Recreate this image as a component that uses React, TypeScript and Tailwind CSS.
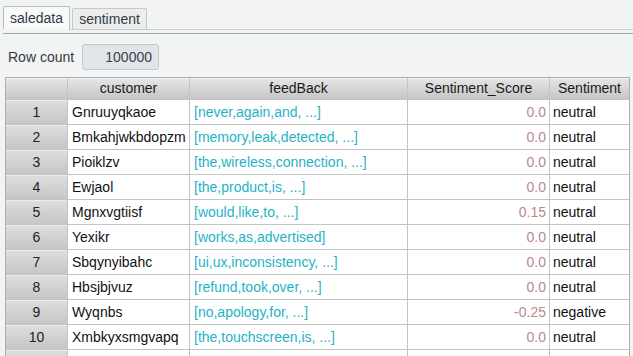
import React from "react";

const rows = [
  ["Gnruuyqkaoe", "[never,again,and, ...]", "0.0", "neutral"],
  ["Bmkahjwkbdopzm", "[memory,leak,detected, ...]", "0.0", "neutral"],
  ["Pioiklzv", "[the,wireless,connection, ...]", "0.0", "neutral"],
  ["Ewjaol", "[the,product,is, ...]", "0.0", "neutral"],
  ["Mgnxvgtiisf", "[would,like,to, ...]", "0.15", "neutral"],
  ["Yexikr", "[works,as,advertised]", "0.0", "neutral"],
  ["Sbqynyibahc", "[ui,ux,inconsistency, ...]", "0.0", "neutral"],
  ["Hbsjbjvuz", "[refund,took,over, ...]", "0.0", "neutral"],
  ["Wyqnbs", "[no,apology,for, ...]", "-0.25", "negative"],
  ["Xmbkyxsmgvapq", "[the,touchscreen,is, ...]", "0.0", "neutral"],
];

const hdr =
  "h-[21px] flex items-center justify-center bg-gradient-to-b from-[#e6e6e6] to-[#c6c6c6] shadow-[inset_0_1px_0_#f4f4f4] text-[#1a1a1a]";
const num =
  "h-[24px] flex items-center justify-center bg-gradient-to-b from-[#dedede] to-[#c6c6c6] shadow-[inset_0_1px_0_#ececec] text-[#222]";
const cell = "h-[24px] flex items-center bg-white whitespace-nowrap overflow-hidden";

export default function App() {
  return (
    <div
      className="w-[633px] h-[356px] overflow-hidden bg-[#f2f4f4] text-[14px]"
      style={{ fontFamily: '"Liberation Sans", Arial, sans-serif' }}
    >
      {/* tabs */}
      <div className="h-[29px] flex items-end pl-[3px] gap-[2px] pt-[1px]">
        <div className="h-[23px] w-[67px] border border-b-0 border-[#b7bec2] bg-[#f8f9f9] rounded-t-[2px] flex items-center justify-center text-[#333a44] text-[14px]">
          saledata
        </div>
        <div className="h-[21px] w-[75px] border border-b-0 border-[#c3c9cc] bg-[#eceeee] rounded-t-[2px] flex items-center justify-center text-[#333a44] text-[14px]">
          sentiment
        </div>
      </div>
      <div className="h-[5px] flex flex-col">
        <div className="h-px ml-[69px] bg-[#c6cccf]" />
        <div className="h-[3px]" />
        <div className="h-px ml-[3px] bg-[#9ea7ab]" />
      </div>
      {/* row count */}
      <div className="h-[43px] pt-[10px] flex items-start">
        <div className="w-[82px] pl-[8px] h-[26px] flex items-center text-[#333a44]">Row count</div>
        <div className="w-[77px] h-[26px] rounded-[3px] border border-[#c3c9ce] bg-[#e1e5e9] flex items-center justify-end pr-[6px] text-[#3a3f4a]">
          100000
        </div>
      </div>
      {/* table */}
      <div className="ml-[5px] w-[625px] border-t border-l border-r border-[#a9b0b3] bg-[#c4c4c4] grid grid-cols-[61px_121px_217px_141px_79px] gap-px">
        <div className={hdr}></div>
        <div className={hdr}>customer</div>
        <div className={hdr}>feedBack</div>
        <div className={hdr}>Sentiment_Score</div>
        <div className={hdr}>Sentiment</div>
        {rows.map((r, i) => (
          <React.Fragment key={i}>
            <div className={num}>{i + 1}</div>
            <div className={`${cell} pl-[4px] text-[#111]`}>{r[0]}</div>
            <div className={`${cell} pl-[4px] text-[#1fb2c6]`}>{r[1]}</div>
            <div className={`${cell} justify-end pr-[3px] text-[#b98a8c]`}>{r[2]}</div>
            <div className={`${cell} pl-[3px] text-[#111]`}>{r[3]}</div>
          </React.Fragment>
        ))}
        <div className={num}></div>
        <div className={cell}></div>
        <div className={cell}></div>
        <div className={cell}></div>
        <div className={cell}></div>
      </div>
    </div>
  );
}
